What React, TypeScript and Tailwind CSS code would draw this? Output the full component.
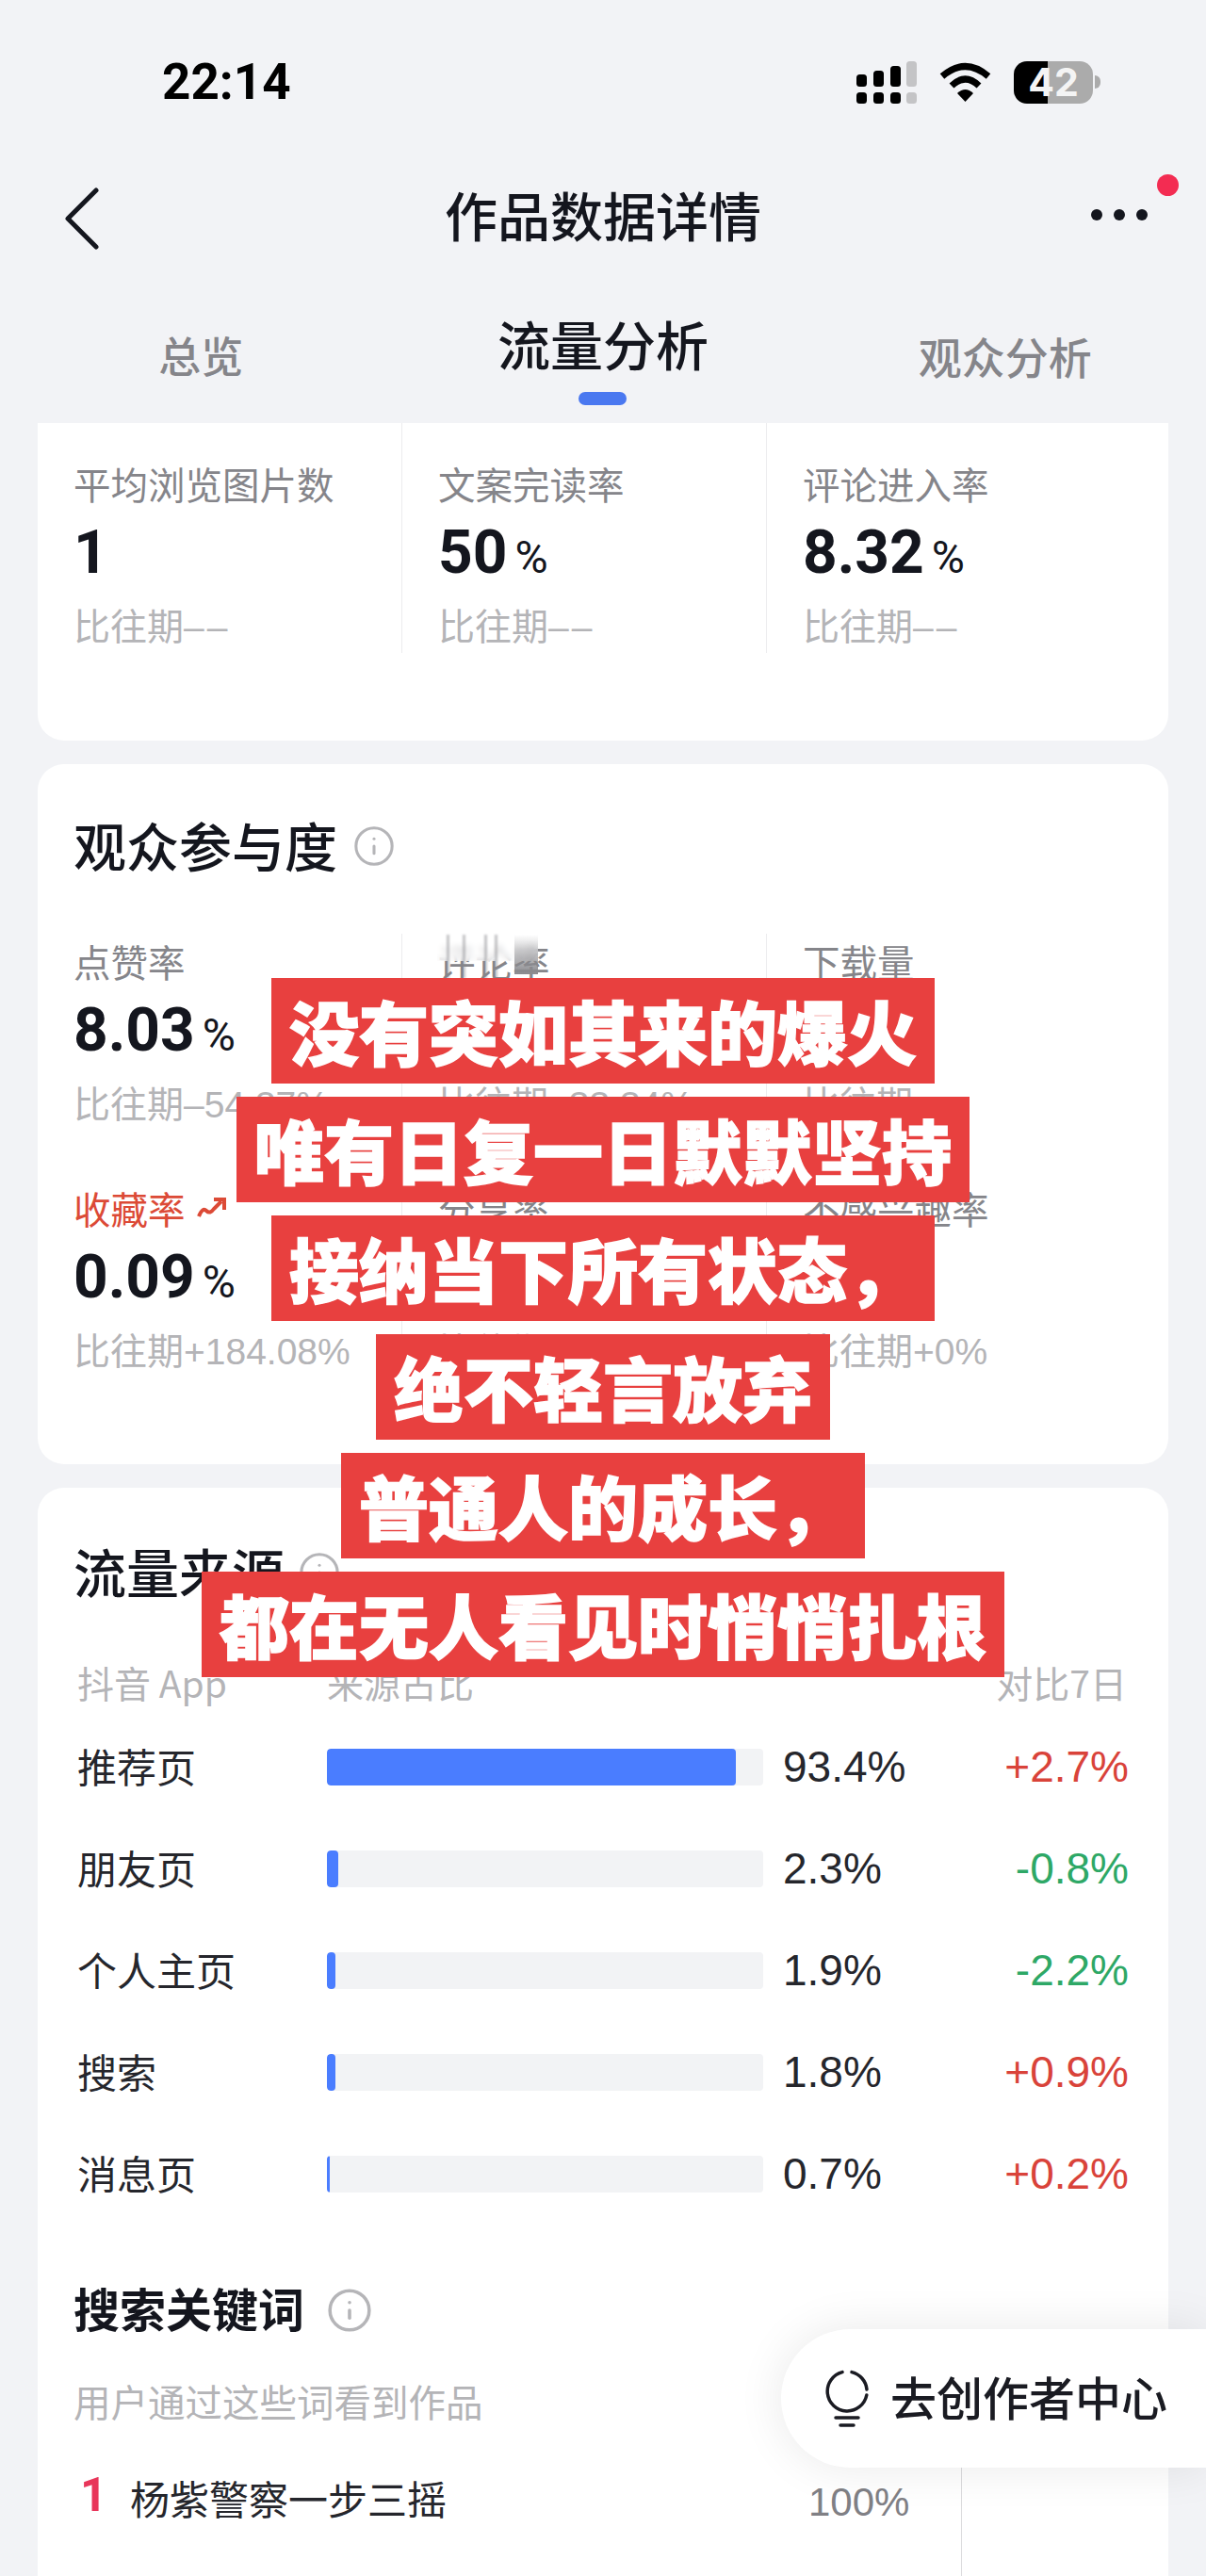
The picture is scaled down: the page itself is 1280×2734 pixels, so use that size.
import React from 'react'
import { Info } from 'lucide-react'

const captions = [
  '没有突如其来的爆火',
  '唯有日复一日默默坚持',
  '接纳当下所有状态，',
  '绝不轻言放弃',
  '普通人的成长，',
  '都在无人看见时悄悄扎根',
]

const sources = [
  { name: '推荐页', share: '93.4%', width: 434, change: '+2.7%', up: true },
  { name: '朋友页', share: '2.3%', width: 12, change: '-0.8%', up: false },
  { name: '个人主页', share: '1.9%', width: 9, change: '-2.2%', up: false },
  { name: '搜索', share: '1.8%', width: 9, change: '+0.9%', up: true },
  { name: '消息页', share: '0.7%', width: 3, change: '+0.2%', up: true },
]

// smeared strokes left by the blur over the hidden label
const smearLines = [47, 64, 87, 98]

const noCompare = (
  <>
    比往期<span className="tracking-[3px]">––</span>
  </>
)

function SignalIcon() {
  return (
    <svg width="64" height="45" viewBox="0 0 64 45">
      <rect x="0" y="14" width="11" height="13" rx="3.5" fill="#000" />
      <rect x="18" y="10" width="11" height="17" rx="3.5" fill="#000" />
      <rect x="36" y="5" width="11" height="22" rx="3.5" fill="#000" />
      <rect x="53" y="0" width="11" height="27" rx="3.5" fill="#c4c4c6" />
      <rect x="0" y="33" width="11" height="12" rx="3.5" fill="#000" />
      <rect x="18" y="33" width="11" height="12" rx="3.5" fill="#000" />
      <rect x="36" y="33" width="11" height="12" rx="3.5" fill="#000" />
      <rect x="53" y="33" width="11" height="12" rx="3.5" fill="#c4c4c6" />
    </svg>
  )
}

function WifiIcon() {
  return (
    <svg width="57" height="42" viewBox="0 0 57 42" fill="none">
      <path d="M4 15 Q28.5 -6 53 15" stroke="#000" strokeWidth="7" />
      <path d="M14 25 Q28.5 11 43 25" stroke="#000" strokeWidth="7" />
      <path d="M20 33 Q28.5 25 37 33 L28.5 42 Z" fill="#000" />
    </svg>
  )
}

function BulbIcon() {
  return (
    <svg width="48" height="64" viewBox="0 0 48 64" fill="none" stroke="#1a1b22" strokeWidth="3.5" strokeLinecap="round">
      <path d="M19 3.6 A21 21 0 1 0 44.8 28" />
      <path d="M29 3.6 A21 21 0 0 1 45 22" />
      <path d="M12 52 H36" />
      <path d="M17 60 H31" />
    </svg>
  )
}

function Metric({
  label,
  value,
  compare,
  divider,
  highlight,
}: {
  label: string
  value?: string
  compare: React.ReactNode
  divider?: boolean
  highlight?: boolean
}) {
  return (
    <div className={`pl-[38px] ${divider ? 'border-l border-[#ececee]' : ''}`}>
      <div className={`flex items-center text-[39.5px] leading-[52px] ${highlight ? 'text-[#dc4a36]' : 'text-[#85858a]'}`}>
        {label}
        {highlight && (
          <svg className="ml-[12px]" width="32" height="24" viewBox="0 0 32 24" fill="none" stroke="#dc4a36" strokeWidth="4">
            <path d="M2 21 Q6 11 10 15 T18 13 L26 5" />
            <path d="M18 3 H29 V14" />
          </svg>
        )}
      </div>
      <div className="mt-[12px] flex h-[72px] items-baseline font-['Roboto',sans-serif] font-bold text-[#14161e]">
        {value && (
          <>
            <span className="text-[64px] leading-[72px]">{value.replace('%', '')}</span>
            {value.endsWith('%') && <span className="ml-[8px] text-[48px] font-normal leading-[72px]">%</span>}
          </>
        )}
      </div>
      <div className="mt-[17px] font-['Liberation_Sans','Noto_Sans_CJK_SC',sans-serif] text-[39px] leading-[52px] text-[#b4b4b7]">{compare}</div>
    </div>
  )
}

function SectionTitle({ children, iconClass }: { children: React.ReactNode; iconClass?: string }) {
  return (
    <div className="flex h-[66px] items-center text-[56px] font-medium leading-[66px] text-[#14161e]">
      {children}
      <Info className={`mt-[4px] ${iconClass ?? 'ml-[16px]'}`} size={46} color="#b5b5b8" strokeWidth={1.6} />
    </div>
  )
}

export default function App() {
  return (
    <div className="relative flex h-[2734px] w-[1280px] flex-col overflow-hidden bg-[#f2f3f6] font-['Noto_Sans_CJK_SC','Noto_Sans',sans-serif]">
      {/* Status bar */}
      <div className="flex h-[174px] shrink-0 items-center justify-between pl-[172px] pr-[112px]">
        <span className="font-['Roboto',sans-serif] text-[53px] font-bold leading-none text-black">22:14</span>
        <div className="flex items-center gap-[23px]">
          <SignalIcon />
          <WifiIcon />
          <div className="flex items-center gap-[2px]">
            <div className="flex h-[45px] w-[84px] items-center justify-center rounded-[14px] bg-[linear-gradient(90deg,#000_43%,#ababab_43%)] font-['Inter',sans-serif] text-[41px] font-bold leading-none text-[#f4f4f4]">
              42
            </div>
            <div className="h-[14px] w-[6px] rounded-r-full bg-[#ababab]" />
          </div>
        </div>
      </div>

      {/* Nav */}
      <div className="grid h-[112px] shrink-0 grid-cols-[1fr_auto_1fr] items-center">
        <div className="pl-[69px] pt-[4px]">
          <svg width="36" height="66" viewBox="0 0 36 66" fill="none" stroke="#14161e" strokeWidth="5" strokeLinecap="round" strokeLinejoin="round">
            <path d="M33 3 L3 33 L33 63" />
          </svg>
        </div>
        <div className="pb-[6px] text-[56px] font-medium leading-[66px] text-[#14161e]">作品数据详情</div>
        <div className="flex justify-end pr-[62px]">
          <div className="relative flex w-[60px] items-center justify-between pb-[4px]">
            <span className="h-[12px] w-[12px] rounded-full bg-[#14161e]" />
            <span className="h-[12px] w-[12px] rounded-full bg-[#14161e]" />
            <span className="h-[12px] w-[12px] rounded-full bg-[#14161e]" />
            <span className="absolute -right-[33px] -top-[37px] h-[23px] w-[23px] rounded-full bg-[#f32c52]" />
          </div>
        </div>
      </div>

      {/* Tabs */}
      <div className="grid h-[163px] shrink-0 grid-cols-3">
        <div className="flex justify-center pt-[58px] text-[45px] font-medium leading-[66px] text-[#85858a]">总览</div>
        <div className="flex flex-col items-center pt-[45px]">
          <span className="text-[56px] font-medium leading-[66px] text-[#14161e]">流量分析</span>
          <span className="mt-[19px] h-[14px] w-[51px] rounded-full bg-[#4a78f0]" />
        </div>
        <div className="flex justify-center pt-[58px] text-[46px] font-medium leading-[66px] text-[#85858a]">观众分析</div>
      </div>

      {/* Scrolled card */}
      <div className="mx-[40px] h-[337px] shrink-0 rounded-b-[28px] bg-white">
        <div className="grid h-[244px] grid-cols-[386px_387px_1fr] [&>div]:pt-[38px]">
          <Metric label="平均浏览图片数" value="1" compare={noCompare} />
          <Metric label="文案完读率" value="50%" compare={noCompare} divider />
          <Metric label="评论进入率" value="8.32%" compare={noCompare} divider />
        </div>
      </div>

      {/* Audience card */}
      <div className="mx-[40px] mt-[25px] h-[743px] shrink-0 rounded-[28px] bg-white pt-[52px]">
        <div className="pl-[38px]">
          <SectionTitle>观众参与度</SectionTitle>
        </div>
        <div className="mt-[62px] grid grid-cols-[386px_387px_1fr] grid-rows-[262px_200px] [&>div]:pt-[3px]">
          <Metric label="点赞率" value="8.03%" compare="比往期–54.37%" />
          <div className="relative border-l border-[#ececee] pl-[38px]">
            <div className="text-[39.5px] leading-[52px] text-[#85858a]">评论率</div>
            {/* blurred out part of the label */}
            <div className="absolute left-[37px] top-[1px] h-[28px] w-[107px] bg-white/70 backdrop-blur-[3px]" />
            {smearLines.map((x) => (
              <div key={x} className="absolute top-[1px] h-[46px] w-[3px] bg-[#8a8a8e]/50 blur-[1px]" style={{ left: x }} />
            ))}
            <div className="absolute left-[119px] top-[1px] h-[42px] w-[25px] bg-gradient-to-b from-transparent to-[#8a8a8e]" />
            <div className="mt-[101px] font-['Liberation_Sans','Noto_Sans_CJK_SC',sans-serif] text-[39px] leading-[52px] text-[#b4b4b7]">比往期–33.34%</div>
          </div>
          <Metric label="下载量" compare="比往期" divider />
          <Metric label="收藏率" value="0.09%" compare="比往期+184.08%" highlight />
          <Metric label="分享率" compare="比往期" divider />
          <Metric label="不感兴趣率" compare="比往期+0%" divider />
        </div>
      </div>

      {/* Traffic card */}
      <div className="mx-[40px] mt-[25px] flex flex-1 flex-col rounded-t-[28px] bg-white pt-[55px]">
        <div className="pl-[38px]">
          <SectionTitle iconClass="ml-[14px]">流量来源</SectionTitle>
        </div>
        <div className="mt-[59px] flex items-center pl-[42px] pr-[44px] text-[39px] leading-[52px] text-[#b4b4b7]">
          <span className="w-[265px]">抖音 App</span>
          <span className="flex-1">来源占比</span>
          <span>对比7日</span>
        </div>
        <div className="mt-[10px]">
          {sources.map((s) => (
            <div key={s.name} className="flex h-[108px] items-center pl-[42px] pr-[42px]">
              <span className="w-[265px] pb-[3px] text-[42px] leading-[52px] text-[#25262c]">{s.name}</span>
              <div className="h-[39px] w-[463px] overflow-hidden rounded-[4px] bg-[#f2f3f5]">
                <div className="h-full rounded-[4px] bg-[#4a7dff]" style={{ width: s.width }} />
              </div>
              <span className="ml-[21px] flex-1 font-['Liberation_Sans',sans-serif] text-[46px] leading-[52px] text-[#25262c]">{s.share}</span>
              <span className={`font-['Liberation_Sans',sans-serif] text-[46px] leading-[52px] ${s.up ? 'text-[#d9433a]' : 'text-[#2ea866]'}`}>
                {s.change}
              </span>
            </div>
          ))}
        </div>

        <div className="mt-[55px] flex h-[66px] items-center pl-[38px] text-[49px] font-bold leading-[66px] text-[#14161e]">
          搜索关键词
          <Info className="ml-[23px] mt-[5px]" size={50} color="#b5b5b8" strokeWidth={1.7} />
        </div>
        <div className="mt-[40px] pl-[38px] text-[39.5px] leading-[52px] text-[#b4b4b7]">用户通过这些词看到作品</div>
        <div className="flex flex-1">
          <div className="flex flex-1 items-start pl-[45px] pt-[44px]">
            <span className="w-[53px] font-['Roboto',sans-serif] text-[50px] font-bold leading-[60px] text-[#e8365a]">1</span>
            <span className="mt-[3px] text-[42px] leading-[60px] text-[#25262c]">杨紫警察一步三摇</span>
          </div>
          <div className="w-[162px] pt-[52px] font-['Liberation_Sans',sans-serif] text-[42px] leading-[60px] text-[#808085]">100%</div>
          <div className="w-[220px] border-l border-[#dcdcde]" />
        </div>
      </div>

      {/* Floating button */}
      <div className="absolute right-0 top-[2472px] flex h-[147px] w-[451px] items-center gap-[22px] rounded-l-[74px] bg-white pl-[46px] shadow-[0_0_50px_rgba(0,0,0,0.09)]">
        <BulbIcon />
        <span className="pb-[6px] text-[49px] font-medium leading-none text-[#1a1b22]">去创作者中心</span>
      </div>

      {/* Caption overlay */}
      <div className="absolute left-0 right-0 top-[1038px] flex flex-col items-center gap-[14px]">
        {captions.map((line) => (
          <div key={line} className="flex h-[112px] items-center bg-[#e8403f] px-[19px] pb-[2px] text-[74px] font-black leading-none text-white [-webkit-text-stroke:1.5px_#fff]">
            {line}
          </div>
        ))}
      </div>
    </div>
  )
}
